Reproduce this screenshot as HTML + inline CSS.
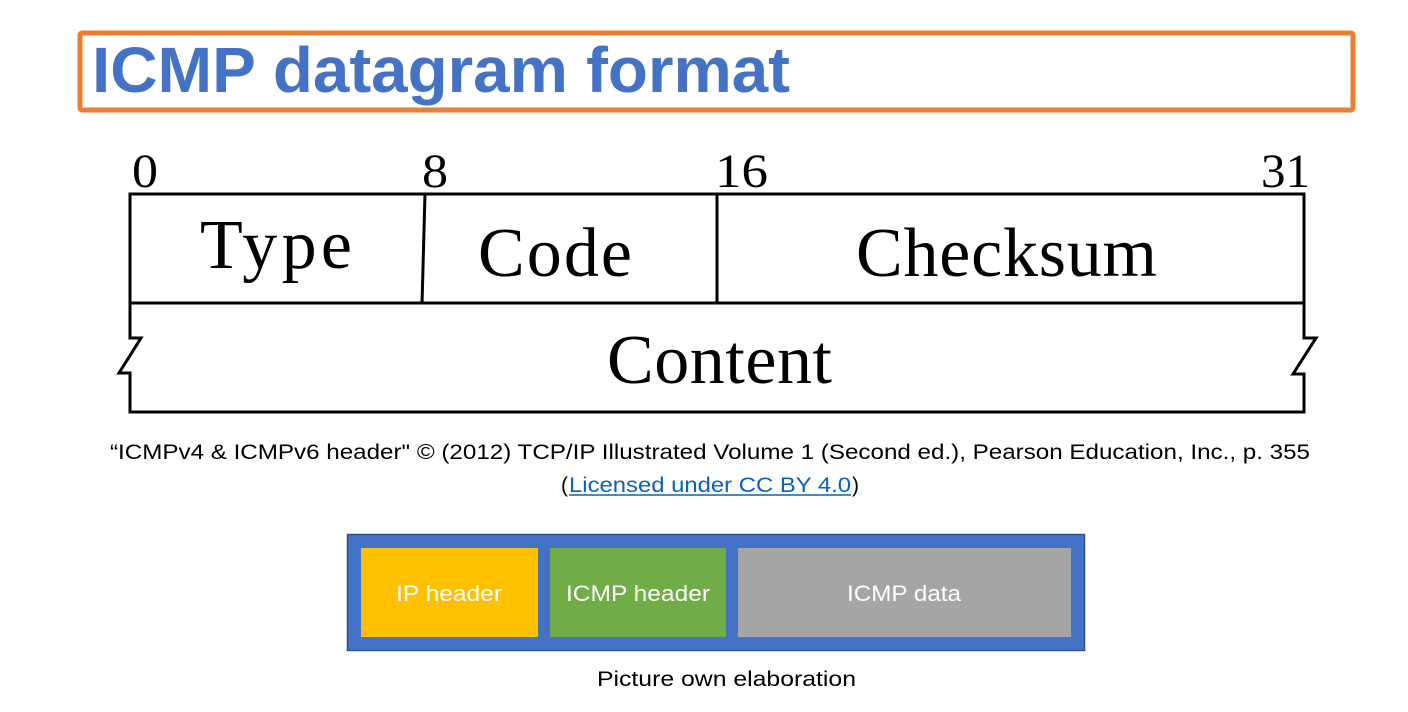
<!DOCTYPE html>
<html><head><meta charset="utf-8"><style>
html,body{margin:0;padding:0;background:#fff;width:1408px;height:712px;overflow:hidden}
svg{display:block}
</style></head><body>
<svg width="1408" height="712" viewBox="0 0 1408 712" xmlns="http://www.w3.org/2000/svg">
<rect x="80" y="33" width="1273" height="77" fill="#fff" stroke="#ED7D31" stroke-width="5" rx="2"/>
<text x="92" y="92" font-family="Liberation Sans, sans-serif" font-weight="bold" font-size="64" fill="#4472C4" textLength="698" lengthAdjust="spacingAndGlyphs">ICMP datagram format</text>

<g font-family="Liberation Serif, serif" fill="#000">
<text x="132" y="187" font-size="48" textLength="26" lengthAdjust="spacingAndGlyphs">0</text>
<text x="422" y="187" font-size="48" textLength="26" lengthAdjust="spacingAndGlyphs">8</text>
<text x="715" y="187" font-size="48" textLength="53" lengthAdjust="spacingAndGlyphs">16</text>
<text x="1261" y="187" font-size="48" textLength="49" lengthAdjust="spacingAndGlyphs">31</text>
<text x="200" y="268" font-size="70" textLength="152" lengthAdjust="spacing">Type</text>
<text x="478" y="276" font-size="70" textLength="154" lengthAdjust="spacing">Code</text>
<text x="856" y="276" font-size="70" textLength="301" lengthAdjust="spacing">Checksum</text>
<text x="607" y="383" font-size="70" textLength="225" lengthAdjust="spacing">Content</text>
</g>
<g fill="none" stroke="#000" stroke-width="3" stroke-linejoin="miter">
<line x1="128.5" y1="194" x2="1305.5" y2="194"/>
<line x1="130" y1="303" x2="1304" y2="303"/>
<line x1="425" y1="194" x2="422" y2="304"/>
<line x1="717" y1="194" x2="717" y2="303"/>
<path d="M130 194 V338 H141 L119 373 H130 V412 H1304 V374 H1293 L1316 338 H1304 V194"/>
</g>

<g font-family="Liberation Sans, sans-serif" font-size="21" fill="#000">
<text x="110" y="459" textLength="1200" lengthAdjust="spacingAndGlyphs">“ICMPv4 &amp; ICMPv6 header" © (2012) TCP/IP Illustrated Volume 1 (Second ed.), Pearson Education, Inc., p. 355</text>
<text x="561" y="492">(</text>
<text x="569" y="492" fill="#0563C1" textLength="282" lengthAdjust="spacingAndGlyphs">Licensed under CC BY 4.0</text>
<line x1="569" y1="495" x2="851" y2="495" stroke="#0563C1" stroke-width="1.5"/>
<text x="852" y="492">)</text>
<text x="597" y="686" textLength="259" lengthAdjust="spacingAndGlyphs">Picture own elaboration</text>
</g>

<rect x="347.5" y="534.5" width="737" height="116" fill="#4472C4" stroke="#2F528F" stroke-width="1.5"/>
<rect x="361" y="548" width="177" height="89" fill="#FFC000"/>
<rect x="550" y="548" width="176" height="89" fill="#70AD47"/>
<rect x="738" y="548" width="333" height="89" fill="#A5A5A5"/>
<g font-family="Liberation Sans, sans-serif" font-size="22" fill="#fff">
<text x="396" y="601" textLength="106" lengthAdjust="spacingAndGlyphs">IP header</text>
<text x="566" y="601" textLength="144" lengthAdjust="spacingAndGlyphs">ICMP header</text>
<text x="847" y="601" textLength="114" lengthAdjust="spacingAndGlyphs">ICMP data</text>
</g>
</svg>
</body></html>
